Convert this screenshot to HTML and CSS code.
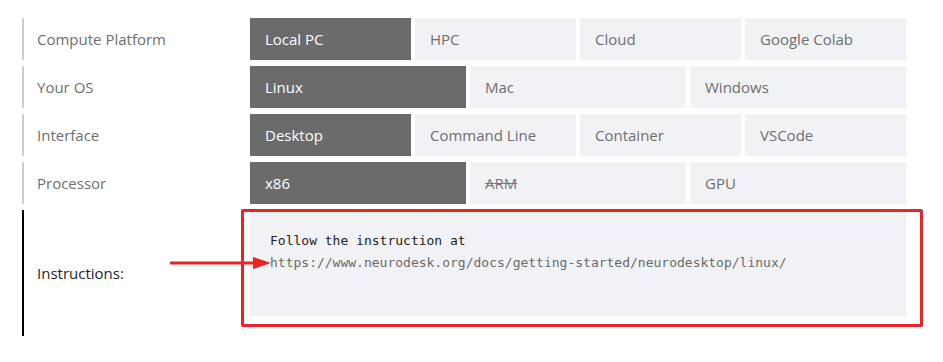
FILE: index.html
```html
<!DOCTYPE html>
<html lang="en">
<head>
  <meta charset="UTF-8">
  <meta name="viewport" content="width=device-width, initial-scale=1.0">
  <title>Install Neurodesk</title>
  <link rel="stylesheet" href="styles.css">
</head>
<body>
  <div class="selector">
    <div class="row">
      <div class="label">Compute Platform</div>
      <div class="options">
        <div class="option active">Local PC</div>
        <div class="option">HPC</div>
        <div class="option">Cloud</div>
        <div class="option">Google Colab</div>
      </div>
    </div>
    <div class="row">
      <div class="label">Your OS</div>
      <div class="options">
        <div class="option active">Linux</div>
        <div class="option">Mac</div>
        <div class="option">Windows</div>
      </div>
    </div>
    <div class="row">
      <div class="label">Interface</div>
      <div class="options">
        <div class="option active">Desktop</div>
        <div class="option">Command Line</div>
        <div class="option">Container</div>
        <div class="option">VSCode</div>
      </div>
    </div>
    <div class="row">
      <div class="label">Processor</div>
      <div class="options">
        <div class="option active">x86</div>
        <div class="option"><s>ARM</s></div>
        <div class="option">GPU</div>
      </div>
    </div>
    <div class="row instructions">
      <div class="label">Instructions:</div>
      <div class="options">
        <pre class="code">Follow the instruction at
<span class="url">https://www.neurodesk.org/docs/getting-started/neurodesktop/linux/</span>
</pre>
      </div>
    </div>

    <!-- red annotation on top of the screenshot -->
    <div class="highlight"></div>
    <svg class="arrow" width="104" height="14" viewBox="0 0 104 14">
      <line x1="0" y1="7" x2="86" y2="7" stroke="#ec2227" stroke-width="3"/>
      <polygon points="83,1 101,7 83,13" fill="#ec2227"/>
    </svg>
  </div>
</body>
</html>
```

FILE: styles.css
```css
body, html {
  margin: 0;
  padding: 0;
  background-color: white;
  font-family: 'Open Sans', sans-serif;
}

.selector {
  position: relative;
  padding: 18px 0 0 22px;
  display: flex;
  flex-direction: column;
  gap: 6px;
}

.row {
  display: flex;
  height: 42px;
}

.label {
  box-sizing: border-box;
  width: 228px;
  border-left: 2px solid #cfcfcf;
  padding-left: 13px;
  display: flex;
  align-items: center;
  font-size: 15px;
  color: #6f6f6f;
}

.options {
  display: flex;
  gap: 4px;
  width: 656px;
}

.option {
  flex: 1;
  display: flex;
  align-items: center;
  padding-left: 15px;
  background-color: #f1f2f6;
  color: #6f6f6f;
  font-size: 15px;
}

.option.active {
  background-color: #6b6b6b;
  color: white;
}

.option s {
  color: #777;
}

.instructions {
  height: 126px;
}

.instructions .label {
  border-left-color: black;
  color: #1f1f1f;
}

.code {
  box-sizing: border-box;
  width: 100%;
  height: 106px;
  margin: 0;
  padding: 20px 20px;
  background-color: #f1f2f6;
  font-family: 'DejaVu Sans Mono', monospace;
  font-size: 13px;
  line-height: 22px;
  color: #222;
}

.code .url {
  color: #6a6a6a;
}

.highlight {
  position: absolute;
  left: 241px;
  top: 209px;
  width: 676px;
  height: 112px;
  border: 3px solid #ec2227;
  border-radius: 2px;
}

.arrow {
  position: absolute;
  left: 170px;
  top: 256px;
}
```
